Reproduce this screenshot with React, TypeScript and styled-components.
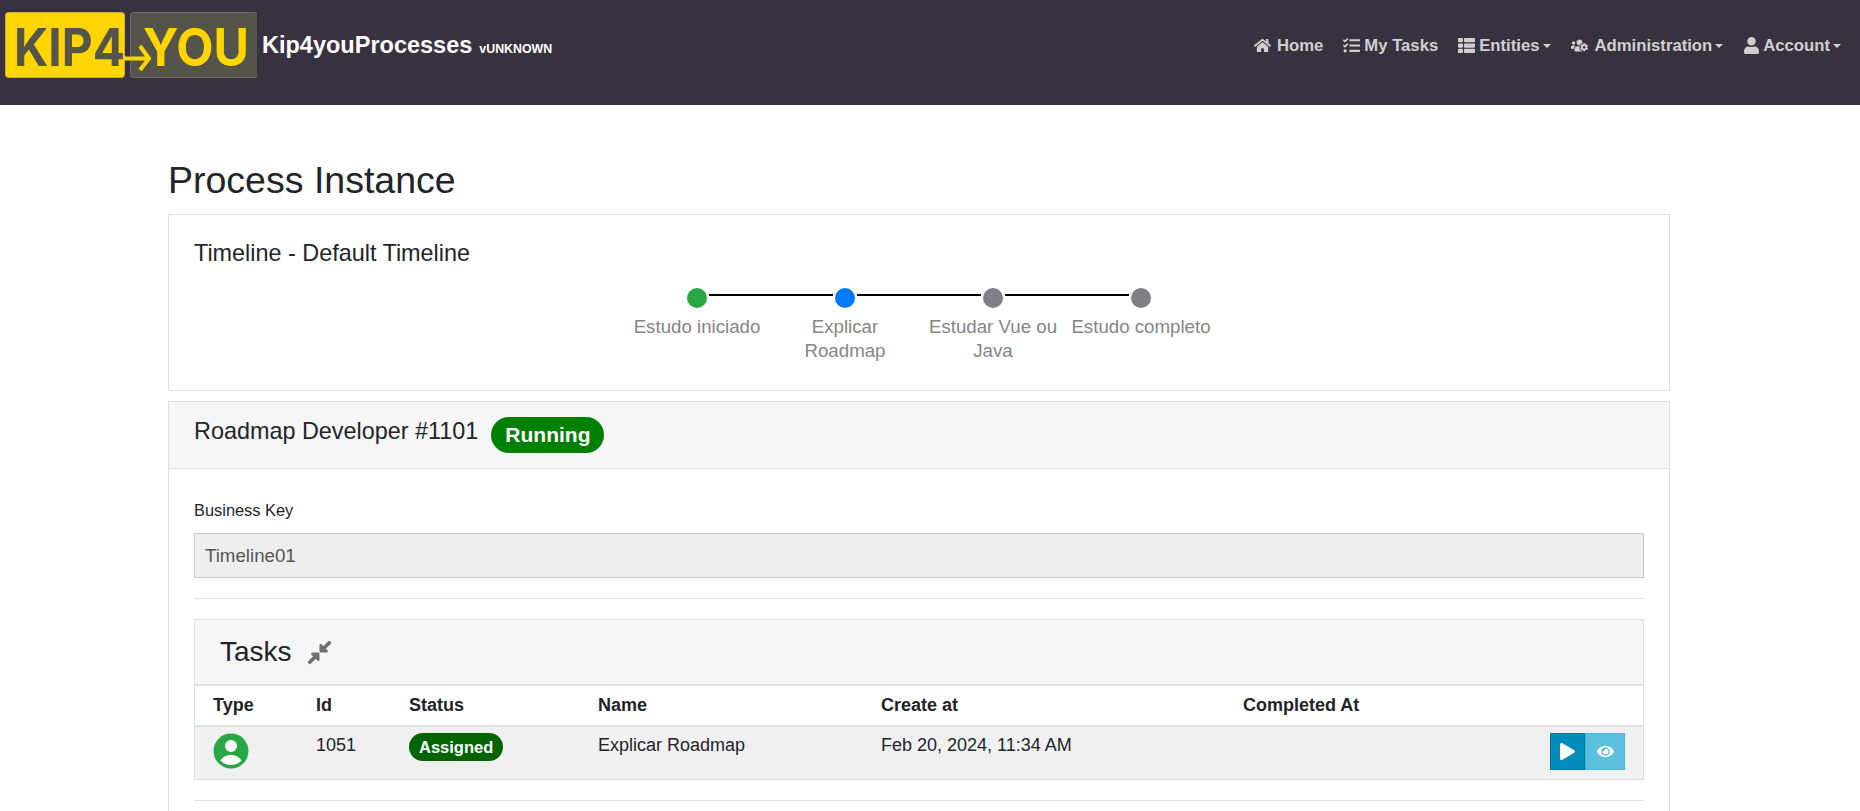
import React from "react";
import styled, { createGlobalStyle } from "styled-components";
import { FaHome, FaTasks, FaThList, FaUsersCog, FaUser, FaCompressAlt, FaPlay, FaEye } from "react-icons/fa";

const Global = createGlobalStyle`
  html, body { margin: 0; padding: 0; height: 100%; overflow: hidden; background: #fff; }
  body { font-family: "Liberation Sans", Arial, sans-serif; font-size: 16px; color: #212529; line-height: 1.5; }
  * { box-sizing: border-box; }
`;

const Header = styled.header`
  height: 105px; background: #383240; display: flex; align-items: flex-start; justify-content: space-between;
  padding: 12px 19px 0 5px;
`;
const Brand = styled.div`display: flex; align-items: flex-start; gap: 5px;`;
const BrandTitle = styled.span`
  font-size: 23.5px; font-weight: 700; color: #fff; line-height: 30px; margin-top: 18px; white-space: nowrap;
`;
const Version = styled.small`font-size: 12.4px; font-weight: 700; margin-left: 7px;`;
const Nav = styled.nav`display: flex; align-items: center; gap: 20px; height: 42px; margin-top: 13px;`;
const NavItem = styled.a<{ $caret?: boolean; $gap?: number }>`
  display: flex; align-items: center; gap: ${(p) => p.$gap ?? 4}px; color: #cfcfcf; font-weight: 700; font-size: 16.7px; white-space: nowrap;
  svg { font-size: 17px; }
  ${(p) => p.$caret ? `&::after { content: ""; margin-left: ${3 - (p.$gap ?? 4)}px; border-top: 4px solid; border-left: 4px solid transparent; border-right: 4px solid transparent; }` : ""}
`;

const Page = styled.div`padding-right: 22px;`;
const Container = styled.main`width: 1502px; margin: 0 auto;`;
const PageTitle = styled.h2`font-size: 37.5px; font-weight: 400; line-height: 46px; margin: 0; padding-top: 52px; height: 109px; color: #212529;`;
const Card = styled.section`border: 1px solid #dfdfdf; background: #fff; margin-bottom: 10px;`;
const TimelineBody = styled.div`height: 175px; padding: 25px;`;
const TimelineTitle = styled.h5`font-size: 23.4px; font-weight: 400; line-height: 26px; margin: 0 0 20px;`;
const Steps = styled.ol`display: flex; justify-content: center; list-style: none; margin: 0; padding: 0;`;
const Step = styled.li`
  position: relative; width: 148px; text-align: center; color: #858585; font-size: 18.7px; line-height: 24px;
`;
const Dot = styled.span<{ $color: string }>`
  display: block; width: 20px; height: 20px; border-radius: 50%; background: ${(p) => p.$color}; margin: 2px auto 7px;
`;
const Connector = styled.span`
  position: absolute; left: calc(50% + 12px); top: 8px; width: 124px; height: 2px; background: #000;
`;
const CardHeader = styled.div`
  height: 67px; background: #f6f6f6; border-bottom: 1px solid #dfdfdf; padding: 16px 25px 0; display: flex; align-items: flex-start; gap: 13px;
`;
const CardTitle = styled.h5`font-size: 23.4px; font-weight: 400; line-height: 26px; margin: 0;`;
const RunningBadge = styled.span`
  background: #008000; color: #fff; font-weight: 700; font-size: 21px; line-height: 36px; height: 36px; padding: 0 14px; border-radius: 18px; margin-top: -1px;
`;
const CardBody = styled.div`padding: 29px 25px 30px;`;
const Label = styled.label`display: block; font-size: 16.4px; line-height: 24px; margin-bottom: 11px;`;
const Input = styled.div`
  height: 45px; background: #eee; border: 1px solid #c8c8c8; padding: 0 10px; font-size: 18.7px; line-height: 43px; color: #555;
`;
const Rule = styled.hr`border: 0; border-top: 1px solid #e2e2e2; margin: 20px 0; height: 0;`;
const TaskPanel = styled.div`border: 1px solid #dfdfdf;`;
const TaskHeader = styled.div`
  height: 64px; background: #f6f6f6; display: flex; align-items: center; gap: 14px; padding: 0 25px;
`;
const TaskTitle = styled.h4`font-size: 28px; font-weight: 400; margin: 0; line-height: 32px;`;
const CompressIcon = styled(FaCompressAlt)`color: #6f6f6f; font-size: 27px;`;
const Table = styled.table`width: 100%; border-collapse: collapse; table-layout: fixed;`;
const Th = styled.th<{ $w?: number }>`
  ${(p) => (p.$w ? `width: ${p.$w}px;` : "")}
  text-align: left; font-weight: 700; font-size: 18px; padding: 0 0 0 18px; height: 41px;
  border-top: 2px solid #dee2e6; border-bottom: 2px solid #dee2e6;
`;
const Td = styled.td`
  background: #f0f0f0; padding: 6px 0 0 18px; height: 53px; font-size: 18px; vertical-align: top; line-height: 24px;
`;
const ActionCell = styled(Td)`padding: 6px 18px 0 0;`;
const AssignedBadge = styled.span`
  display: inline-block; background: #006400; color: #fff; font-weight: 700; font-size: 16.5px; line-height: 28px; height: 28px; padding: 0 10px; border-radius: 14px;
`;
const Actions = styled.div`display: flex; justify-content: flex-end;`;
const ActionButton = styled.button<{ $bg: string; $border: string; $w: number }>`
  width: ${(p) => p.$w}px; height: 37px; background: ${(p) => p.$bg}; border: 1px solid ${(p) => p.$border}; color: #fff;
  display: flex; align-items: center; justify-content: center; padding: 0; font-size: 17px;
`;
const UserType = styled.svg`display: block; width: 36px; height: 36px;`;

const Logo = () => (
  <svg width="252" height="66" viewBox="0 0 252 66" style={{ display: "block" }}>
    <rect x="0.5" y="0.5" width="119" height="65" rx="3" fill="#ffd500" stroke="#c9b23a" />
    <rect x="125.5" y="0.5" width="127" height="65" rx="3" fill="#54544b" stroke="#6d6d70" />
    <text x="9" y="54" fontFamily="Inter, sans-serif" fontWeight="700" fontSize="52" fill="#54544b" textLength="111" lengthAdjust="spacingAndGlyphs">KIP4</text>
    <text x="138" y="54" fontFamily="Inter, sans-serif" fontWeight="700" fontSize="52" fill="#ffd500" textLength="106" lengthAdjust="spacingAndGlyphs">YOU</text>
    <path d="M119 46.5 H143 M135 34 L144 46.5 L135 58" stroke="#ffd500" strokeWidth="4" fill="none" />
  </svg>
);

const steps = [
  { name: "Estudo iniciado", color: "#28a745" },
  { name: "Explicar Roadmap", color: "#007bff" },
  { name: "Estudar Vue ou Java", color: "#807e86" },
  { name: "Estudo completo", color: "#807e86" },
];

export default function App() {
  return (
    <>
      <Global />
      <Header>
        <Brand>
          <Logo />
          <BrandTitle>Kip4youProcesses<Version>vUNKNOWN</Version></BrandTitle>
        </Brand>
        <Nav>
          <NavItem $gap={6}><FaHome />Home</NavItem>
          <NavItem><FaTasks />My Tasks</NavItem>
          <NavItem $caret><FaThList />Entities</NavItem>
          <NavItem $caret $gap={7}><FaUsersCog />Administration</NavItem>
          <NavItem $caret $gap={3}><FaUser />Account</NavItem>
        </Nav>
      </Header>
      <Page>
        <Container>
          <PageTitle>Process Instance</PageTitle>
          <Card>
            <TimelineBody>
              <TimelineTitle>Timeline - Default Timeline</TimelineTitle>
              <Steps>
                {steps.map((s, i) => (
                  <Step key={s.name}>
                    <Dot $color={s.color} />
                    {i < steps.length - 1 && <Connector />}
                    {s.name}
                  </Step>
                ))}
              </Steps>
            </TimelineBody>
          </Card>
          <Card>
            <CardHeader>
              <CardTitle>Roadmap Developer #1101</CardTitle>
              <RunningBadge>Running</RunningBadge>
            </CardHeader>
            <CardBody>
              <Label>Business Key</Label>
              <Input>Timeline01</Input>
              <Rule />
              <TaskPanel>
                <TaskHeader>
                  <TaskTitle>Tasks</TaskTitle>
                  <CompressIcon />
                </TaskHeader>
                <Table>
                  <thead>
                    <tr>
                      <Th $w={103}>Type</Th>
                      <Th $w={93}>Id</Th>
                      <Th $w={189}>Status</Th>
                      <Th $w={283}>Name</Th>
                      <Th $w={362}>Create at</Th>
                      <Th>Completed At</Th>
                      <Th $w={100} />
                    </tr>
                  </thead>
                  <tbody>
                    <tr>
                      <Td>
                        <UserType viewBox="0 0 36 36">
                          <circle cx="18" cy="18" r="17.5" fill="#28a745" />
                          <circle cx="18" cy="13" r="6" fill="#fff" />
                          <path d="M7.5 27.5 C10 23.5 14 22 18 22 C22 22 26 23.5 28.5 27.5 C26 30.5 22 32 18 32 C14 32 10 30.5 7.5 27.5 Z" fill="#fff" />
                        </UserType>
                      </Td>
                      <Td>1051</Td>
                      <Td><AssignedBadge>Assigned</AssignedBadge></Td>
                      <Td>Explicar Roadmap</Td>
                      <Td>Feb 20, 2024, 11:34 AM</Td>
                      <Td />
                      <ActionCell>
                        <Actions>
                          <ActionButton $w={35} $bg="#008cba" $border="#0079a1"><FaPlay /></ActionButton>
                          <ActionButton $w={40} $bg="#5bc0de" $border="#46b8da"><FaEye /></ActionButton>
                        </Actions>
                      </ActionCell>
                    </tr>
                  </tbody>
                </Table>
              </TaskPanel>
              <Rule />
            </CardBody>
          </Card>
        </Container>
      </Page>
    </>
  );
}
